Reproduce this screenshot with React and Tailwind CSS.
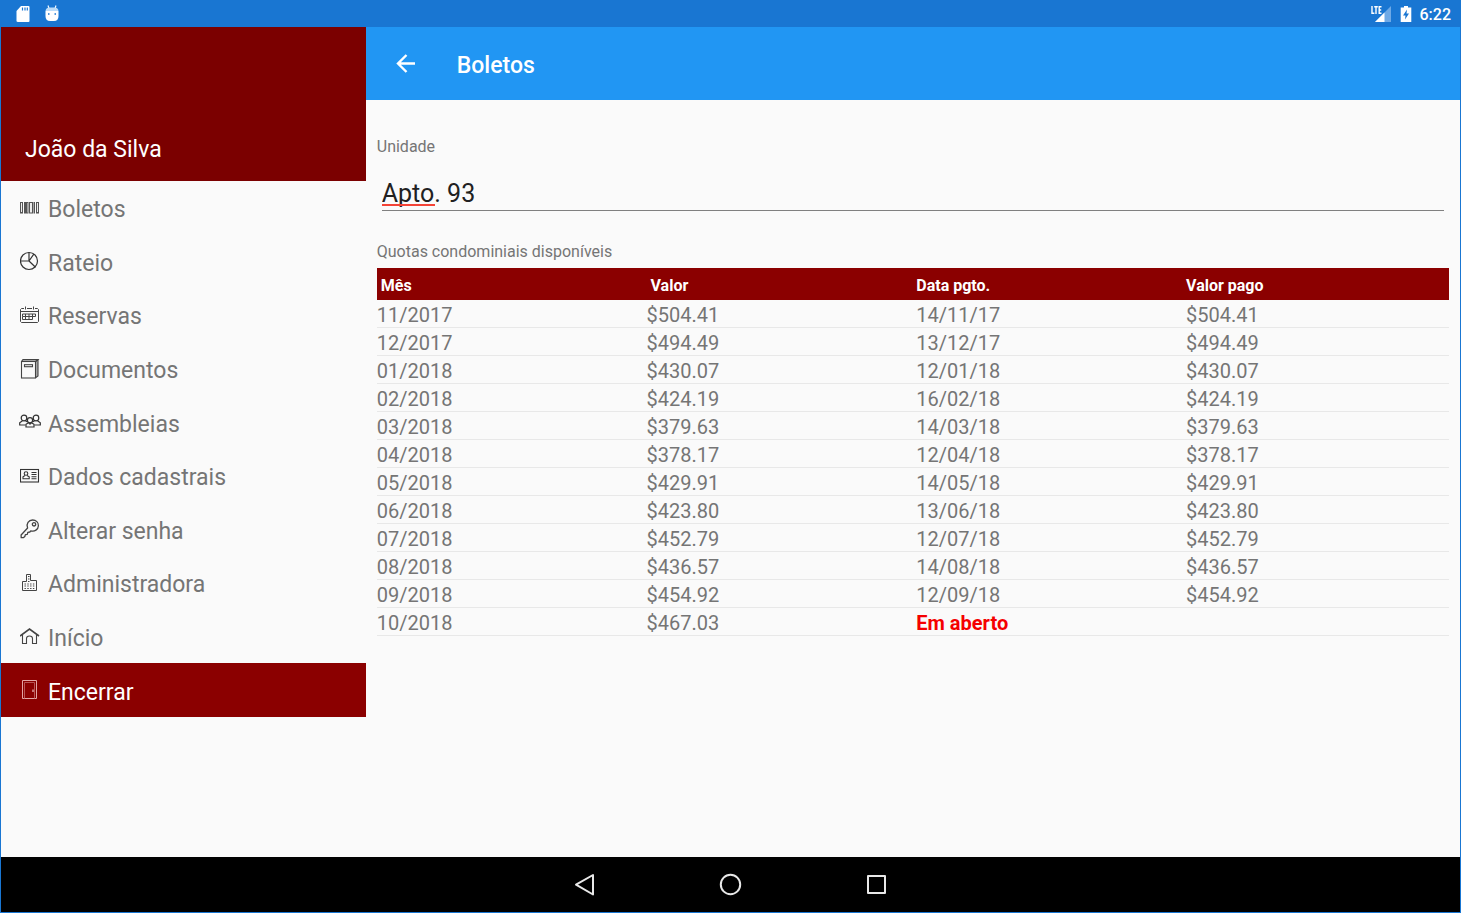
import React from "react";

const BarcodeIcon = () => (
    <svg viewBox="0 0 20 20" className="w-5 h-5 shrink-0" fill="#eee" stroke="#555" strokeWidth="1">
        <rect x="0.5" y="4.5" width="2" height="10.5" />
        <rect x="4.5" y="4.5" width="1" height="10.5" />
        <rect x="6.5" y="4.5" width="1.5" height="10.5" />
        <rect x="9.5" y="4.5" width="3" height="10.5" />
        <rect x="14" y="4.5" width="0.5" height="10.5" />
        <rect x="16.5" y="4.5" width="2" height="10.5" />
    </svg>
);

const PieIcon = () => (
    <svg viewBox="0 0 20 20" className="w-5 h-5 shrink-0" fill="none" stroke="#333" strokeWidth="1.2">
        <circle cx="9" cy="10" r="8.5" />
        <path d="M0.5 10H9V1.5M9 10L14 2.8M9 10L15.5 16.2" />
    </svg>
);

const CalendarIcon = () => (
    <svg viewBox="0 0 20 20" className="w-5 h-5 shrink-0" fill="none" stroke="#444" strokeWidth="1">
        <path d="M4 3.5H1.5L0.5 4.5V16.5L1.5 17.5H17.5L18.5 16.5V4.5L17.5 3.5H15M7 3.5H12M0.5 6.5H18.5M5.5 1.5V4.5M13.5 1.5V4.5" />
        <path d="M2.5 9H15.5V11.5H2.5ZM2.5 11.5V14.5H12.5V9M5.5 9V14.5M9 9V14.5" />
    </svg>
);

const BookIcon = () => (
    <svg viewBox="0 0 20 20" className="w-5 h-5 shrink-0" fill="none" stroke="#444" strokeWidth="1.1">
        <path d="M15.5 2.5L18 0.5V17L15.5 18.8" fill="#aaa" />
        <path d="M1.5 2.5L3 0.5H18L15.5 2.5" fill="#aaa" />
        <rect x="1.5" y="2.5" width="14" height="16.5" />
        <rect x="4.5" y="5.7" width="8" height="2" />
    </svg>
);

const PeopleIcon = () => (
    <svg viewBox="0 0 22 20" className="w-[22px] h-5 -mr-px shrink-0" fill="none" stroke="#333" strokeWidth="1.2">
        <circle cx="5" cy="6" r="2.8" />
        <circle cx="17" cy="6" r="2.8" />
        <path d="M3.5 8.7L0.7 10.7V13H6.5M6.5 8.7L8 9.7M18.5 8.7L21.3 10.7V13H15.5M15.5 8.7L14 9.7" />
        <circle cx="11" cy="8.3" r="2.6" />
        <path d="M9.5 10.7L7 12.3V15H15V12.3L12.5 10.7L11 12.2L9.5 10.7" />
    </svg>
);

const IdCardIcon = () => (
    <svg viewBox="0 0 20 20" className="w-5 h-5 shrink-0" fill="none" stroke="#333" strokeWidth="1.1">
        <rect x="0.5" y="3.5" width="18" height="12.5" />
        <circle cx="6" cy="7.5" r="1.8" />
        <path d="M5 9.5L3 10.8V12.8H9.2V10.8L7 9.5" />
        <path d="M11.5 6.5H16.5M11.5 8.5H16.5M11.5 10.7H16.5M11.5 12.8H16.5" />
    </svg>
);

const KeyIcon = () => (
    <svg viewBox="0 0 20 20" className="w-5 h-5 shrink-0" fill="none" stroke="#444" strokeWidth="1.3" strokeLinejoin="round">
        <path d="M7.6 9C5.8 4.6 8.8 1 12.6 1C16 1 18.6 3.4 18.4 6.7C18.2 10.6 14.6 13 10.8 11.8L9.8 13L7.8 13.3L7.3 15.3L5.4 15.6L4.8 17.5L3.6 18.5L1.2 18.6L1.1 16Z" />
        <circle cx="14" cy="5.3" r="1.7" />
    </svg>
);

const BuildingIcon = () => (
    <svg viewBox="0 0 20 20" className="w-5 h-5 shrink-0" fill="none" stroke="#444" strokeWidth="1">
        <path d="M2.5 17.5V8.5H6.5V1.5H10.5V7.5H16.5V17.5Z" />
        <path d="M8 3.5H9.5M8 6H9.5M8 8.5H9.5" strokeWidth="1.2" />
        <path d="M4.5 11H15.5M4.5 13H15.5M4.5 15.5H15.5" strokeWidth="1.2" strokeDasharray="1.4 1.4" />
    </svg>
);

const HomeIcon = () => (
    <svg viewBox="0 0 20 20" className="w-5 h-5 shrink-0" fill="none" stroke="#444" strokeWidth="1.1">
        <path d="M0 9L9.5 2L19 9" strokeWidth="1.6" />
        <path d="M2.5 8V16.5H6.5V11.5C6.5 8.2 12.5 8.2 12.5 11.5V16.5H16.5V8" />
    </svg>
);

const DoorIcon = () => (
    <svg viewBox="0 0 20 20" className="w-5 h-5 shrink-0" fill="none" stroke="#e3a5a5" strokeWidth="1">
        <path d="M2.5 18.5V0.5H16.5V18.5Z" />
        <path d="M4.5 18.5V2.5H14.5V18.5" stroke="#b85555" />
        <path d="M13 9.5V12" strokeWidth="1.4" />
    </svg>
);

const menuItems = [
    { name: "Boletos", path: "#boletos", icon: BarcodeIcon },
    { name: "Rateio", path: "#rateio", icon: PieIcon },
    { name: "Reservas", path: "#reservas", icon: CalendarIcon },
    { name: "Documentos", path: "#documentos", icon: BookIcon },
    { name: "Assembleias", path: "#assembleias", icon: PeopleIcon },
    { name: "Dados cadastrais", path: "#dados", icon: IdCardIcon },
    { name: "Alterar senha", path: "#senha", icon: KeyIcon },
    { name: "Administradora", path: "#administradora", icon: BuildingIcon },
    { name: "Início", path: "#inicio", icon: HomeIcon },
    { name: "Encerrar", path: "#encerrar", icon: DoorIcon, exit: true }
];

const quotas = [
    { month: "11/2017", value: "$504.41", paidAt: "14/11/17" },
    { month: "12/2017", value: "$494.49", paidAt: "13/12/17" },
    { month: "01/2018", value: "$430.07", paidAt: "12/01/18" },
    { month: "02/2018", value: "$424.19", paidAt: "16/02/18" },
    { month: "03/2018", value: "$379.63", paidAt: "14/03/18" },
    { month: "04/2018", value: "$378.17", paidAt: "12/04/18" },
    { month: "05/2018", value: "$429.91", paidAt: "14/05/18" },
    { month: "06/2018", value: "$423.80", paidAt: "13/06/18" },
    { month: "07/2018", value: "$452.79", paidAt: "12/07/18" },
    { month: "08/2018", value: "$436.57", paidAt: "14/08/18" },
    { month: "09/2018", value: "$454.92", paidAt: "12/09/18" },
    { month: "10/2018", value: "$467.03", paidAt: null }
];

const StatusBar = () => (
    <div className="h-[27px] bg-[#1976d2] flex items-center justify-between pl-[14px] pr-[9px] text-white">
        <div className="flex items-center gap-[13px]">
            {/* SD card */}
            <svg viewBox="0 0 16 18" className="w-4 h-[18px]">
                <path d="M6 1H13.5Q14.5 1 14.5 2V16Q14.5 17 13.5 17H3Q1.5 17 1.5 16V6Z" fill="#fff" />
                <path d="M7.5 2.5V5.5M10 2.5V5.5M12.3 2.5V5.5" stroke="#1976d2" strokeWidth="1.2" />
            </svg>
            {/* Android debug head */}
            <svg viewBox="0 0 16 18" className="w-4 h-[18px]">
                <path d="M4 0.5L5 3.5M12 0.5L11 3.5" stroke="#fff" strokeWidth="1.1" />
                <path d="M1.5 6Q2 2.5 5 2.5H11Q14 2.5 14.5 6Z" fill="#bcdcf8" />
                <path d="M1.5 6H14.5V11Q14.5 16 10 16H6Q1.5 16 1.5 11Z" fill="#fff" />
                <path d="M4 9H5.5M10.5 9H12" stroke="#1976d2" strokeWidth="1.3" />
            </svg>
        </div>
        <div className="flex items-center">
            <svg viewBox="0 0 22 18" className="w-[22px] h-[18px] mr-[7px]">
                <path d="M20 1V17H4Z" fill="#6ea9e6" />
                <path d="M13.5 7.5V17H4Z" fill="#fff" />
                <path d="M0 0H11V8.5H0Z" fill="#1976d2" />
                <path d="M1 1V8.3H3.4M3.2 1.7H6.8M5 1.7V9M10.5 1.7H8.2V8.3H10.5M8.2 5H10.2" fill="none" stroke="#fff" strokeWidth="1.4" />
            </svg>
            <svg viewBox="0 0 12 18" className="w-3 h-[18px] mr-2">
                <path d="M4 1H8V2.5H11.3V17H0.7V2.5H4Z" fill="#fff" />
                <path d="M7 4.5L3 10.5H5.5L5 14.5L9 8.5H6.5Z" fill="#1976d2" />
            </svg>
            <span className="text-base leading-5 font-medium pt-[2px]">6:22</span>
        </div>
    </div>
);

const Sidebar = () => (
    <aside className="w-1/4 shrink-0">
        <div className="h-[154px] bg-[#7b0000] flex items-end pl-6 pb-[15px] text-white text-[23px] leading-8">
            João da Silva
        </div>
        <nav className="h-[536px] flex flex-col">
            {menuItems.map((item) => {
                const Icon = item.icon;
                return (
                    <a
                        key={item.name}
                        href={item.path}
                        className={`flex-1 flex items-center gap-2 pl-[18px] text-[23px] leading-8 ${
                            item.exit ? "bg-[#8b0000] text-white" : "text-[#757575]"
                        }`}
                    >
                        <span className="w-[21px] flex justify-end">
                            <Icon />
                        </span>
                        <span className="pt-[5px]">{item.name}</span>
                    </a>
                );
            })}
        </nav>
    </aside>
);

const QuotaTable = () => (
    <table className="w-full table-fixed border-separate border-spacing-0 text-left">
        <caption className="text-left text-base leading-6 text-[#757575] pb-1">
            Quotas condominiais disponíveis
        </caption>
        <thead>
            <tr className="h-8 bg-[#8b0000] text-white text-base leading-6">
                <th className="w-[25.16%] p-0 pt-1 pl-1 font-bold">Mês</th>
                <th className="w-[25.16%] p-0 pt-1 pl-1 font-bold">Valor</th>
                <th className="w-[25.16%] p-0 pt-1 font-bold">Data pgto.</th>
                <th className="p-0 pt-1 font-bold">Valor pago</th>
            </tr>
        </thead>
        <tbody className="text-xl leading-6 text-[#757575]">
            {quotas.map((quota) => (
                <tr key={quota.month} className="h-7">
                    <td className="p-0 pt-[3px] border-b border-[#e8e8e8]">{quota.month}</td>
                    <td className="p-0 pt-[3px] border-b border-[#e8e8e8]">{quota.value}</td>
                    <td className="p-0 pt-[3px] border-b border-[#e8e8e8]">
                        {quota.paidAt || <strong className="font-bold text-[#f50000]">Em aberto</strong>}
                    </td>
                    <td className="p-0 pt-[3px] border-b border-[#e8e8e8]">{quota.paidAt && quota.value}</td>
                </tr>
            ))}
        </tbody>
    </table>
);

const SystemNav = () => (
    <div className="h-[55px] bg-black flex items-center justify-center">
        <button aria-label="Voltar" className="w-[146px] h-full flex items-center justify-center">
            <svg viewBox="0 0 24 24" className="w-6 h-6" fill="none" stroke="#e8e8e8" strokeWidth="2" strokeLinejoin="round">
                <path d="M20 2V21.5L3 11.7Z" />
            </svg>
        </button>
        <button aria-label="Tela inicial" className="w-[146px] h-full flex items-center justify-center">
            <svg viewBox="0 0 24 24" className="w-6 h-6" fill="none" stroke="#e8e8e8" strokeWidth="2">
                <circle cx="11.5" cy="11.5" r="9.7" />
            </svg>
        </button>
        <button aria-label="Recentes" className="w-[146px] h-full flex items-center justify-center">
            <svg viewBox="0 0 24 24" className="w-6 h-6" fill="none" stroke="#e8e8e8" strokeWidth="2" strokeLinejoin="round">
                <rect x="3" y="3" width="17" height="17" />
            </svg>
        </button>
    </div>
);

const App = () => {
    return (
        <div className="min-h-screen flex flex-col bg-[#fafafa] border-x border-b border-[#1976d2] font-['Roboto',sans-serif]">
            <StatusBar />
            <div className="flex-1 flex">
                <Sidebar />
                <div className="flex-1 min-w-0">
                    <header className="h-[73px] bg-[#2196f3] flex items-center pl-7 text-white">
                        <button aria-label="Voltar" className="w-6 h-6 mr-[39px]">
                            <svg viewBox="0 0 24 24" className="w-6 h-6" fill="none" stroke="#fff" strokeWidth="2.4">
                                <path d="M21 11.5H4.5M12.5 3L4 11.5L12.5 20" />
                            </svg>
                        </button>
                        <h1 className="text-[23px] leading-8 font-medium pt-1">Boletos</h1>
                    </header>

                    <main className="px-[11px] pt-[35px]">
                        <label htmlFor="unidade" className="block text-base leading-6 text-[#757575]">
                            Unidade
                        </label>
                        <div className="relative mx-[5px] mt-[15px] mb-[29px]">
                            <input
                                id="unidade"
                                type="text"
                                defaultValue="Apto. 93"
                                className="block w-full h-[37px] pt-[3px] border-b border-[#808080] bg-transparent text-[25px] text-[#212121] outline-none"
                            />
                            {/* spell checker mark */}
                            <span className="absolute left-0 bottom-[5px] w-[53px] h-[2px] bg-[#f44336]"></span>
                        </div>
                        <QuotaTable />
                    </main>
                </div>
            </div>
            <SystemNav />
        </div>
    );
};

export default App;
